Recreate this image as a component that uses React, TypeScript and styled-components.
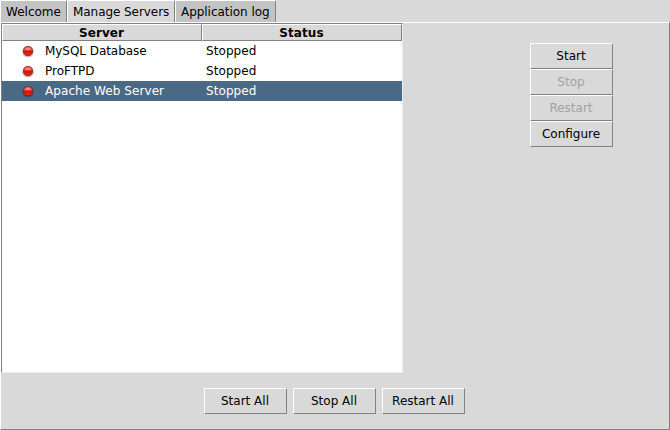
import React from "react";
import styled, { createGlobalStyle } from "styled-components";

const GlobalStyle = createGlobalStyle`
  * { box-sizing: border-box; }
  body {
    margin: 0;
    background: #d9d9d9;
    overflow: hidden;
    font: 12px "DejaVu Sans", sans-serif;
    color: #000;
  }
`;

const Window = styled.div`
  display: flex;
  flex-direction: column;
  width: 670px;
  height: 430px;
  background: #d9d9d9;
`;

const TabBar = styled.div`
  display: flex;
  align-items: flex-end;
  height: 22px;
`;

const Tab = styled.button<{ $active?: boolean; $width: number; $tracking?: number }>`
  width: ${(p) => p.$width}px;
  height: ${(p) => (p.$active ? 23 : 22)}px;
  margin: 0 0 ${(p) => (p.$active ? -1 : 0)}px;
  padding: 1px 0 ${(p) => (p.$active ? 2 : 1)}px 5px;
  border: 1px solid #fff;
  border-right-color: #828282;
  border-bottom: 0;
  border-radius: 2px 2px 0 0;
  background: ${(p) => (p.$active ? "#d9d9d9" : "#c3c3c3")};
  font: inherit;
  line-height: 20px;
  letter-spacing: ${(p) => p.$tracking ?? 0}px;
  text-align: left;
  white-space: nowrap;
  color: #000;
`;

const Panel = styled.main`
  display: flex;
  flex-direction: column;
  height: 408px;
  border: 1px solid #fff;
  border-right-color: #828282;
  border-bottom-color: #828282;
`;

const Content = styled.div`
  display: flex;
  height: 350px;
`;

const Tree = styled.div`
  width: 402px;
  height: 350px;
  border: 1px solid #828282;
  border-right-color: #ececec;
  border-bottom-color: #ececec;
  background: #fff;
`;

const Columns = styled.div`
  display: grid;
  grid-template-columns: 200px 200px;
`;

const HeaderCell = styled.div`
  height: 17px;
  padding-right: 1px;
  border: 1px solid #fff;
  border-right-color: #828282;
  border-bottom-color: #828282;
  background: #d9d9d9;
  font-weight: bold;
  line-height: 16px;
  letter-spacing: 0.08px;
  text-align: center;
`;

const Row = styled(Columns)<{ $selected: boolean }>`
  height: 20px;
  line-height: 20px;
  background: ${(p) => (p.$selected ? "#4a6984" : "#fff")};
  color: ${(p) => (p.$selected ? "#fff" : "#000")};
`;

const NameCell = styled.div<{ $tracking: number }>`
  display: flex;
  align-items: center;
  gap: 10px;
  padding-left: 19px;
  letter-spacing: ${(p) => p.$tracking}px;
`;

const StatusCell = styled.div`
  padding-left: 4px;
  letter-spacing: 0.08px;
`;

const Actions = styled.div`
  display: flex;
  flex-direction: column;
  margin: 20px 0 0 127px;
`;

const BulkActions = styled.div`
  display: flex;
  gap: 6px;
  margin: 15px 0 0 203px;
`;

const Button = styled.button`
  width: 83px;
  height: 26px;
  padding: 1px 1px 0 0;
  border: 1px solid #fff;
  border-right-color: #828282;
  border-bottom-color: #828282;
  background: #d9d9d9;
  font: inherit;
  line-height: 23px;
  color: #000;

  &:disabled {
    color: #a3a3a3;
  }
`;

const StoppedIcon = () => (
  <svg width="14" height="14" viewBox="0 0 14 14">
    <defs>
      <linearGradient id="lamp" x1="0" y1="0" x2="0" y2="1">
        <stop offset="0" stopColor="#cc4038" />
        <stop offset="0.3" stopColor="#f05a4c" />
        <stop offset="0.5" stopColor="#de2014" />
        <stop offset="0.62" stopColor="#d00c04" />
        <stop offset="0.85" stopColor="#f42818" />
        <stop offset="1" stopColor="#c01808" />
      </linearGradient>
    </defs>
    <ellipse cx="7" cy="8.2" rx="6" ry="5.2" fill="#000" opacity="0.18" />
    <circle cx="7" cy="7" r="5.2" fill="#8b1812" opacity="0.8" />
    <circle cx="7" cy="7" r="4.4" fill="url(#lamp)" />
    <ellipse cx="7" cy="4.9" rx="2.4" ry="1.3" fill="#fff" opacity="0.32" />
  </svg>
);

const servers = [
  { name: "MySQL Database", status: "Stopped", selected: false, tracking: -0.05 },
  { name: "ProFTPD", status: "Stopped", selected: false, tracking: 0 },
  { name: "Apache Web Server", status: "Stopped", selected: true, tracking: 0.07 },
];

export default function App() {
  return (
    <>
      <GlobalStyle />
      <Window>
        <TabBar>
          <Tab $width={67}>Welcome</Tab>
          <Tab $width={108} $active $tracking={-0.06}>Manage Servers</Tab>
          <Tab $width={101} $tracking={-0.04}>Application log</Tab>
        </TabBar>
        <Panel>
          <Content>
            <Tree>
              <Columns>
                <HeaderCell>Server</HeaderCell>
                <HeaderCell>Status</HeaderCell>
              </Columns>
              {servers.map((s) => (
                <Row key={s.name} $selected={s.selected}>
                  <NameCell $tracking={s.tracking}>
                    <StoppedIcon />
                    {s.name}
                  </NameCell>
                  <StatusCell>{s.status}</StatusCell>
                </Row>
              ))}
            </Tree>
            <Actions>
              <Button>Start</Button>
              <Button disabled>Stop</Button>
              <Button disabled>Restart</Button>
              <Button>Configure</Button>
            </Actions>
          </Content>
          <BulkActions>
            <Button>Start All</Button>
            <Button>Stop All</Button>
            <Button>Restart All</Button>
          </BulkActions>
        </Panel>
      </Window>
    </>
  );
}
